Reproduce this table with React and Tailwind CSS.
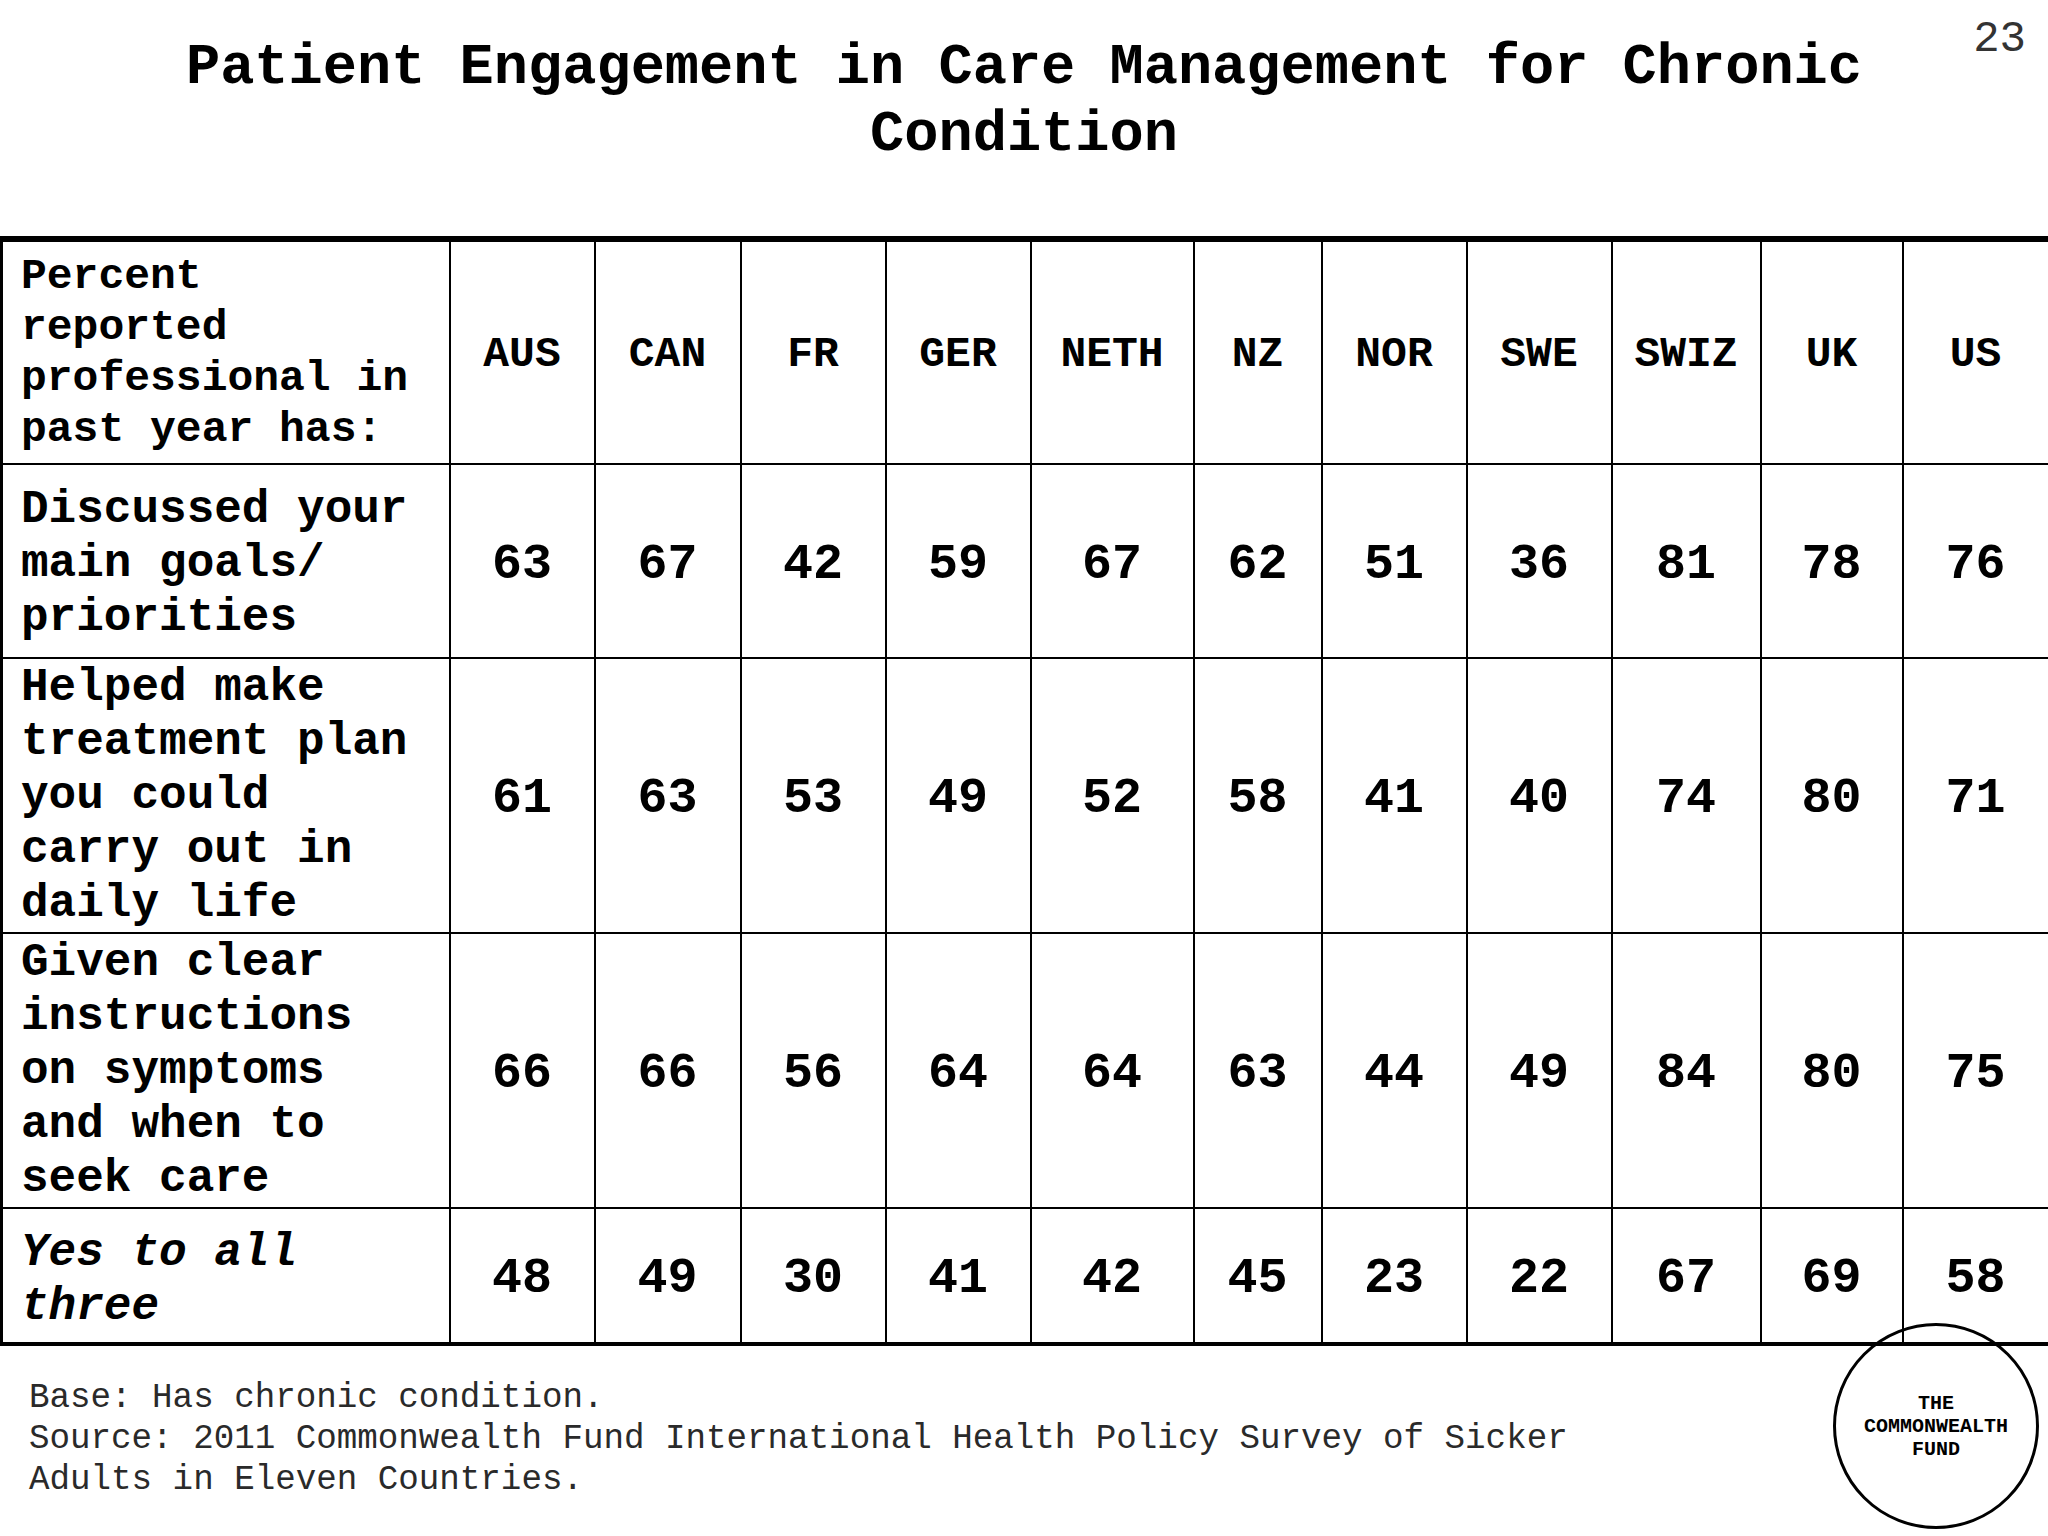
import React from 'react';

const mono = { fontFamily: '"Liberation Mono", "Courier New", monospace' };

const countries = ['AUS', 'CAN', 'FR', 'GER', 'NETH', 'NZ', 'NOR', 'SWE', 'SWIZ', 'UK', 'US'];
const widths = [448, 145, 146, 145, 145, 163, 128, 145, 145, 149, 142, 146];

const rows = [
  {
    label: ['Discussed your', 'main goals/', 'priorities'],
    values: [63, 67, 42, 59, 67, 62, 51, 36, 81, 78, 76],
    height: 'h-[194px]',
    pad: 'pt-[6px]',
  },
  {
    label: ['Helped make', 'treatment plan', 'you could', 'carry out in', 'daily life'],
    values: [61, 63, 53, 49, 52, 58, 41, 40, 74, 80, 71],
    height: 'h-[275px]',
    pad: 'pt-0',
  },
  {
    label: ['Given clear', 'instructions', 'on symptoms', 'and when to', 'seek care'],
    values: [66, 66, 56, 64, 64, 63, 44, 49, 84, 80, 75],
    height: 'h-[275px]',
    pad: 'pt-0',
  },
  {
    label: ['Yes to all', 'three'],
    values: [48, 49, 30, 41, 42, 45, 23, 22, 67, 69, 58],
    height: 'h-[136px]',
    pad: 'pt-[8px]',
    italic: true,
    last: true,
  },
];

export default function App() {
  return (
    <div className="relative w-[2048px] h-[1536px] bg-white overflow-hidden text-black" style={mono}>
      <div className="absolute right-[22px] top-[14px] text-[44px] leading-[50px] text-[#333]">23</div>

      <h1 className="pt-[35px] text-center text-[57px] leading-[67px] font-bold">
        <div>Patient Engagement in Care Management for Chronic</div>
        <div>Condition</div>
      </h1>

      <table className="mt-[67px] w-[2048px] table-fixed border-collapse">
        <colgroup>
          {widths.map((w, i) => (
            <col key={i} style={{ width: w }} />
          ))}
        </colgroup>
        <tbody>
          <tr>
            <td className="h-[225px] border-2 border-t-[6px] border-l-[3px] border-black pl-[18px] align-middle">
              <div className="text-[43px] leading-[51px] font-bold whitespace-nowrap">
                <div>Percent</div>
                <div>reported</div>
                <div>professional in</div>
                <div>past year has:</div>
              </div>
            </td>
            {countries.map((c) => (
              <td key={c} className="border-2 border-t-[6px] border-black pt-[5px] text-center align-middle text-[43px] font-bold">
                {c}
              </td>
            ))}
          </tr>
          {rows.map((r, ri) => (
            <tr key={ri}>
              <td
                className={`${r.height} ${r.pad} border-2 border-l-[3px] border-black pl-[18px] align-middle ${
                  r.last ? 'border-b-4' : ''
                }`}
              >
                <div className={`text-[46px] leading-[54px] font-bold whitespace-nowrap ${r.italic ? 'italic' : ''}`}>
                  {r.label.map((l, i) => (
                    <div key={i}>{l}</div>
                  ))}
                </div>
              </td>
              {r.values.map((v, i) => (
                <td
                  key={i}
                  className={`border-2 border-black pt-[6px] text-center align-middle text-[50px] font-bold ${
                    r.last ? 'border-b-4' : ''
                  }`}
                >
                  {v}
                </td>
              ))}
            </tr>
          ))}
        </tbody>
      </table>

      <div className="pt-[32px] pl-[29px] text-[34.2px] leading-[41px] text-[#2a2a2a]">
        <div>Base: Has chronic condition.</div>
        <div>Source: 2011 Commonwealth Fund International Health Policy Survey of Sicker</div>
        <div>Adults in Eleven Countries.</div>
      </div>

      <div className="absolute left-[1833px] top-[1323px] w-[206px] h-[206px] rounded-full border-[3px] border-black flex flex-col items-center justify-center">
        <div className="text-[20px] leading-[23px] font-bold text-center">
          <div>THE</div>
          <div>COMMONWEALTH</div>
          <div>FUND</div>
        </div>
      </div>
    </div>
  );
}
